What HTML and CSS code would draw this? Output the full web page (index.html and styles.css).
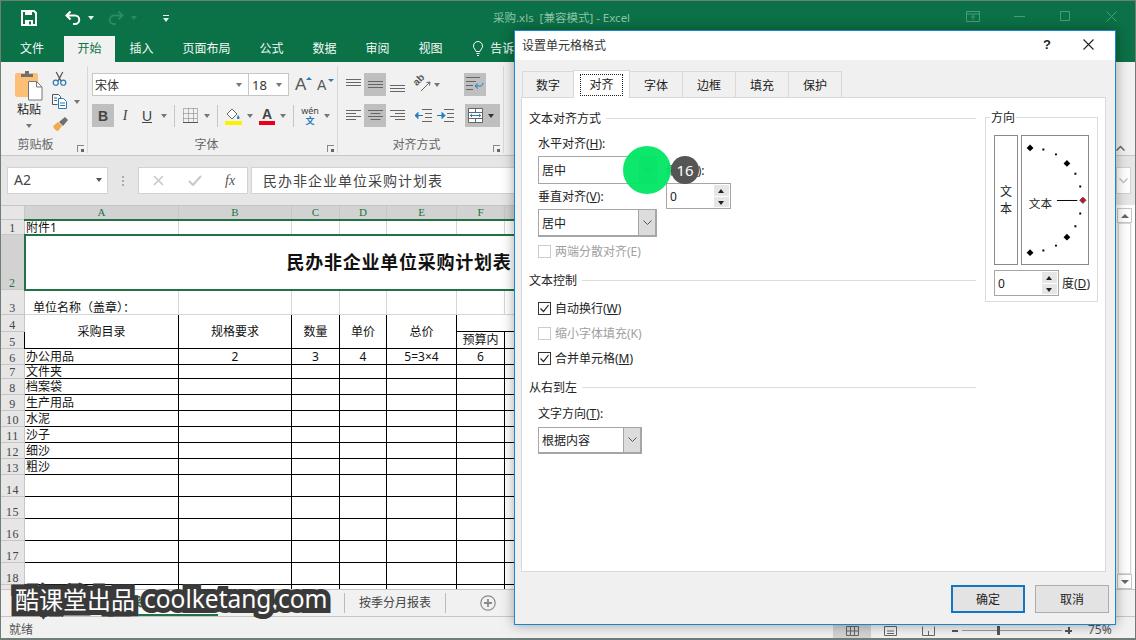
FILE: index.html
```html
<!DOCTYPE html>
<html lang="zh-CN">
<head>
<meta charset="utf-8">
<title>采购.xls - Excel</title>
<link rel="stylesheet" href="styles.css">
</head>
<body>
<div class="app">
  <header class="titlebar">
    <div class="qat">
      <svg class="ic-save" width="16" height="16" viewBox="0 0 16 16"><path d="M1 1h12l2 2v12H1z" fill="none" stroke="#fff" stroke-width="2"/><path d="M4 1h7v4H4zM4 10h8v5H4z" fill="#fff"/><path d="M8 11.500h2v3H8z" fill="#0b7146"/></svg>
      <svg class="ic-undo" width="16" height="16" viewBox="0 0 16 16"><path d="M5.500 1.500 1.500 5.500l4 4M2 5.500h8a4.200 4.200 0 0 1 0 8.500H8" fill="none" stroke="#fff" stroke-width="2"/></svg>
      <i class="caret white c-undo"></i>
      <svg class="ic-redo" width="16" height="16" viewBox="0 0 16 16"><path d="M10.500 1.500 14.500 5.500l-4 4M14 5.500H6a4.200 4.200 0 0 0 0 8.500h2" fill="none" stroke="#2b8a62" stroke-width="2"/></svg>
      <i class="caret dim c-redo"></i>
      <span class="custom"><b></b><i class="caret white"></i></span>
    </div>
    <div class="doc-title">采购.xls&nbsp; [兼容模式] - Excel</div>
    <div class="win-btns">
      <svg width="14" height="11" viewBox="0 0 14 11"><path d="M.5.500h13v10H.5zM.5 3h13M7 9V4.500M5 6.500 7 4.500l2 2" fill="none" stroke="#4b9c7a"/></svg>
      <svg width="11" height="11" viewBox="0 0 11 11"><path d="M0 5.500h11" stroke="#4b9c7a"/></svg>
      <svg width="10" height="10" viewBox="0 0 10 10"><path d="M.5.500h9v9h-9z" fill="none" stroke="#4b9c7a"/></svg>
      <svg width="11" height="11" viewBox="0 0 11 11"><path d="M.5.500l10 10M10.500.500l-10 10" stroke="#4b9c7a"/></svg>
    </div>
  </header>

  <nav class="tabs">
    <span class="tab file">文件</span>
    <span class="tab active">开始</span>
    <span class="tab">插入</span>
    <span class="tab">页面布局</span>
    <span class="tab">公式</span>
    <span class="tab">数据</span>
    <span class="tab">审阅</span>
    <span class="tab">视图</span>
    <svg class="lamp" width="10" height="15" viewBox="0 0 10 15"><path d="M3 10.500C2.500 8.500.5 7.500.5 5a4.500 4.500 0 0 1 9 0c0 2.500-2 3.500-2.500 5.500zM3.500 12.500h3M4 14.500h2" fill="none" stroke="#fff"/></svg>
    <span class="tell">告诉我</span>
  </nav>

  <section class="ribbon">
    <div class="group g-clip">
      <div class="g-body clip-body">
        <div class="paste">
          <svg width="29" height="31" viewBox="0 0 29 31"><path d="M1 5q0-2 2-2h19q2 0 2 2v22H3q-2 0-2-2z" fill="#fdbf75"/><path d="M7 4h4V1h4v3h4v3H7z" fill="#6f6f6f"/><path d="M14.500 11.500h8l5.500 5.500v13H14.500z" fill="#fff" stroke="#777"/><path d="M22.500 11.500V17H28" fill="none" stroke="#777"/></svg>
          <span>粘贴</span>
          <i class="caret"></i>
        </div>
        <div class="clip-tools">
          <svg width="15" height="15" viewBox="0 0 16 16"><path d="M4.500 1l5 9.500M11.500 1l-5 9.500" stroke="#555" stroke-width="1.300"/><circle cx="4" cy="12.500" r="2.700" fill="none" stroke="#2a7bb8" stroke-width="1.300"/><circle cx="12" cy="12.500" r="2.700" fill="none" stroke="#2a7bb8" stroke-width="1.300"/></svg>
          <span class="clip-copy"><svg width="16" height="15" viewBox="0 0 16 15"><path d="M.5.500h6l2 2v2M.5.500v10h5" fill="#fff" stroke="#555"/><path d="M6.500 4.500h5l3 3v7h-8z" fill="#fff" stroke="#2a7bb8"/><path d="M2 4h3M2 6.500h3M8 9h5M8 11.500h5" stroke="#2a7bb8"/></svg><i class="caret"></i></span>
          <svg width="16" height="15" viewBox="0 0 16 15"><path d="M1 9l5-4 4 4-4 5q-3 0-5-5z" fill="#f0a94d"/><path d="M7 5l6-5 3 3-5 6z" fill="#6f6f6f"/></svg>
        </div>
      </div>
      <div class="g-label">剪贴板<i class="launch"></i></div>
    </div>

    <div class="group g-font">
      <div class="g-body">
        <div class="r-row">
          <div class="combo font-name">宋体<i class="caret"></i></div>
          <div class="combo font-size">18<i class="caret"></i></div>
          <span class="grow">A<b class="up"></b></span>
          <span class="shrink">A<b class="down"></b></span>
        </div>
        <div class="r-row row2">
          <span class="btn on bold">B</span>
          <span class="btn ital">I</span>
          <span class="btn und">U</span><i class="caret c-u"></i>
          <i class="vsep s1"></i>
          <svg class="ic-border" width="15" height="15" viewBox="0 0 15 15"><path d="M.5.500h14v14H.5zM5.500.500v14M10.500.500v14M.5 5.500h14M.5 10.500h14" fill="none" stroke="#777" stroke-dasharray="1 1"/><path d="M0 14.500h15" stroke="#555"/></svg><i class="caret c-b"></i>
          <i class="vsep s2"></i>
          <svg class="ic-fill" width="17" height="18" viewBox="0 0 17 18"><path d="M2 7l5-5 5 5-5 5z" fill="#fff" stroke="#666"/><path d="M13 8q2 2 1.500 3.500-1 1-2.500 0 0-2 1-3.500z" fill="#2a7bb8"/><path d="M0 14h17v4H0z" fill="#fdf100"/></svg><i class="caret c-f"></i>
          <span class="fcolor">A<b></b></span><i class="caret c-c"></i>
          <i class="vsep s3"></i>
          <span class="wen"><em>wén</em><u>文</u></span><i class="caret c-w"></i>
        </div>
      </div>
      <div class="g-label">字体<i class="launch"></i></div>
    </div>

    <div class="group g-align">
      <div class="g-body">
        <div class="r-row">
          <span class="al"><svg width="15" height="15" viewBox="0 0 15 15"><path d="M0 2.500h15M0 5.500h15M0 8.500h15" stroke="#666"/></svg></span>
          <span class="al on"><svg width="15" height="15" viewBox="0 0 15 15"><path d="M0 4.500h15M0 7.500h15M0 10.500h15" stroke="#666"/></svg></span>
          <span class="al"><svg width="15" height="15" viewBox="0 0 15 15"><path d="M0 8.500h15M0 11.500h15M0 14.500h15" stroke="#666"/></svg></span>
          <span class="orient"><b>ab</b><svg width="17" height="17" viewBox="0 0 17 17"><path d="M7 15L16 6M16 6l-3.500.5M16 6l-.5 3.500" stroke="#666" fill="none"/></svg></span><i class="caret c-o"></i>
          <span class="al on wrap"><svg width="18" height="17" viewBox="0 0 18 17"><path d="M0 1.500h14M0 5.500h10M0 9.500h7M0 13.500h7" stroke="#666"/><path d="M9 10h6q2-1 2-3M9 10l3-2.500M9 10l3 2.500" stroke="#1f7dbf" fill="none"/></svg></span>
        </div>
        <div class="r-row row2">
          <span class="al"><svg width="15" height="15" viewBox="0 0 15 15"><path d="M0 2.500h15M0 5.500h10M0 8.500h15M0 11.500h10" stroke="#666"/></svg></span>
          <span class="al on"><svg width="15" height="15" viewBox="0 0 15 15"><path d="M0 2.500h15M2.500 5.500h10M0 8.500h15M2.500 11.500h10" stroke="#666"/></svg></span>
          <span class="al"><svg width="15" height="15" viewBox="0 0 15 15"><path d="M0 2.500h15M5 5.500h10M0 8.500h15M5 11.500h10" stroke="#666"/></svg></span>
          <svg class="ic-ind1" width="17" height="13" viewBox="0 0 17 13"><path d="M7 .5h10M10 4.500h7M10 8.500h7M7 12.500h10" stroke="#666"/><path d="M0 6.500h8M0 6.500l3-3v6z" stroke="#1f7dbf" fill="#1f7dbf"/></svg>
          <svg class="ic-ind2" width="17" height="13" viewBox="0 0 17 13"><path d="M7 .5h10M10 4.500h7M10 8.500h7M7 12.500h10" stroke="#666"/><path d="M0 6.500h8M8 6.500l-3-3v6z" stroke="#1f7dbf" fill="#1f7dbf"/></svg>
          <span class="al on merge"><svg width="15" height="15" viewBox="0 0 15 15"><path d="M.5.500h14v14H.5zM.5 4.500h14M.5 10.500h14M7.500.5v4M7.500 10.500v4" fill="#fff" stroke="#666"/><path d="M2 7.500h11" stroke="#1f7dbf"/><path d="M2 7.500l2-2v4zM13 7.500l-2-2v4z" fill="#1f7dbf"/></svg><i class="caret dark"></i></span>
        </div>
      </div>
      <div class="g-label">对齐方式<i class="launch"></i></div>
    </div>

    <svg class="collapse" width="9" height="6" viewBox="0 0 9 6"><path d="M.5 5.500l4-4 4 4" fill="none" stroke="#666" stroke-width="1.500"/></svg>
  </section>

  <section class="fx-bar">
    <div class="name-box">A2<i class="caret"></i></div>
    <i class="grip"></i>
    <div class="fx-btns">
      <svg width="11" height="11" viewBox="0 0 11 11"><path d="M1 1l9 9M10 1l-9 9" stroke="#c8c8c8" stroke-width="1.600"/></svg>
      <svg width="14" height="11" viewBox="0 0 14 11"><path d="M1 6l4 4 8-9" fill="none" stroke="#c8c8c8" stroke-width="2"/></svg>
      <span class="fx">fx</span>
    </div>
    <div class="fx-input">民办非企业单位采购计划表</div>
    <div class="fx-down"><svg width="9" height="6" viewBox="0 0 9 6"><path d="M.5.500l4 4 4-4" fill="none" stroke="#c4c4c4" stroke-width="1.500"/></svg></div>
  </section>

  <section class="sheet">
    <div class="grid-wrap">
      <table class="grid">
        <colgroup><col class="c0"><col class="ca"><col class="cb"><col class="cc"><col class="cd"><col class="ce"><col class="cf"><col class="cg"></colgroup>
        <tr class="h14"><th class="corner"></th><th class="sel">A</th><th class="sel">B</th><th class="sel">C</th><th class="sel">D</th><th class="sel">E</th><th class="sel">F</th><th class="sel">G</th></tr>
        <tr class="h15"><th class="rh">1</th><td class="txt">附件1</td><td></td><td></td><td></td><td></td><td></td><td></td></tr>
        <tr class="h55"><th class="rh rsel">2</th><td class="title" colspan="7">民办非企业单位采购计划表</td></tr>
        <tr class="h25"><th class="rh">3</th><td class="txt unit">单位名称（盖章）：</td><td></td><td></td><td></td><td></td><td></td><td></td></tr>
        <tr class="h17 blk"><th class="rh">4</th><td class="ctr" rowspan="2">采购目录</td><td class="ctr" rowspan="2">规格要求</td><td class="ctr" rowspan="2">数量</td><td class="ctr" rowspan="2">单价</td><td class="ctr" rowspan="2">总价</td><td colspan="2"></td></tr>
        <tr class="h17 blk"><th class="rh">5</th><td class="ctr">预算内</td><td class="ctr">预算外</td></tr>
        <tr class="h16 blk"><th class="rh">6</th><td class="txt">办公用品</td><td class="ctr">2</td><td class="ctr">3</td><td class="ctr">4</td><td class="ctr">5=3×4</td><td class="ctr">6</td><td class="ctr">7</td></tr>
        <tr class="h14 blk"><th class="rh">7</th><td class="txt">文件夹</td><td></td><td></td><td></td><td></td><td></td><td></td></tr>
        <tr class="h16 blk"><th class="rh">8</th><td class="txt">档案袋</td><td></td><td></td><td></td><td></td><td></td><td></td></tr>
        <tr class="h16 blk"><th class="rh">9</th><td class="txt">生产用品</td><td></td><td></td><td></td><td></td><td></td><td></td></tr>
        <tr class="h16 blk"><th class="rh">10</th><td class="txt">水泥</td><td></td><td></td><td></td><td></td><td></td><td></td></tr>
        <tr class="h16 blk"><th class="rh">11</th><td class="txt">沙子</td><td></td><td></td><td></td><td></td><td></td><td></td></tr>
        <tr class="h16 blk"><th class="rh">12</th><td class="txt">细沙</td><td></td><td></td><td></td><td></td><td></td><td></td></tr>
        <tr class="h16 blk"><th class="rh">13</th><td class="txt">粗沙</td><td></td><td></td><td></td><td></td><td></td><td></td></tr>
        <tr class="h22 blk"><th class="rh">14</th><td></td><td></td><td></td><td></td><td></td><td></td><td></td></tr>
        <tr class="h22 blk"><th class="rh">15</th><td></td><td></td><td></td><td></td><td></td><td></td><td></td></tr>
        <tr class="h22 blk"><th class="rh">16</th><td></td><td></td><td></td><td></td><td></td><td></td><td></td></tr>
        <tr class="h22 blk"><th class="rh">17</th><td></td><td></td><td></td><td></td><td></td><td></td><td></td></tr>
        <tr class="h22 blk"><th class="rh">18</th><td></td><td></td><td></td><td></td><td></td><td></td><td></td></tr>
        <tr class="h22 blk"><th class="rh">19</th><td></td><td></td><td></td><td></td><td></td><td></td><td></td></tr>
      </table>
    </div>
    <div class="vscroll">
      <span class="sb-btn"><i class="tri-up"></i></span>
      <span class="sb-track"></span>
      <span class="sb-btn"><i class="tri-down"></i></span>
    </div>
  </section>

  <section class="tabbar">
    <span class="s-tab s-first"></span>
    <span class="s-tab s-active">采购计划表</span>
    <span class="s-tab s-mid">按部门分月报表</span>
    <span class="s-tab s-last">按季分月报表</span>
    <svg class="plus" width="16" height="16" viewBox="0 0 16 16"><circle cx="8" cy="8" r="7.200" fill="none" stroke="#8a8a8a" stroke-width="1.200"/><path d="M8 4v8M4 8h8" stroke="#8a8a8a" stroke-width="1.800"/></svg>
  </section>

  <footer class="status">
    <span class="ready">就绪</span>
    <div class="views">
      <span class="view on"><svg width="13" height="10" viewBox="0 0 13 10"><path d="M.5.500h12v9H.5zM4.500.500v9M8.500.500v9M.5 5h12" fill="none" stroke="#666"/></svg></span>
      <span class="view"><svg width="13" height="10" viewBox="0 0 13 10"><path d="M.5.500h12v9H.5zM3 5h7M3 7.500h7" fill="none" stroke="#666"/></svg></span>
      <span class="view"><svg width="13" height="10" viewBox="0 0 13 10"><path d="M.5.500v9h12v-9M6.500 5v4" fill="none" stroke="#666"/></svg></span>
    </div>
    <span class="z-minus"></span>
    <span class="z-track"><b></b></span>
    <span class="z-plus"></span>
    <span class="z-val">75%</span>
  </footer>

  <div class="dialog">
    <div class="dlg-title">
      <span class="dlg-name">设置单元格格式</span>
      <span class="dlg-help">?</span>
      <svg class="dlg-close" width="11" height="11" viewBox="0 0 11 11"><path d="M.5.500l10 10M10.500.500l-10 10" stroke="#222" stroke-width="1.100"/></svg>
    </div>
    <div class="dlg-tabs">
      <span class="d-tab">数字</span>
      <span class="d-tab on"><span class="focus">对齐</span></span>
      <span class="d-tab">字体</span>
      <span class="d-tab">边框</span>
      <span class="d-tab">填充</span>
      <span class="d-tab">保护</span>
    </div>
    <div class="panel">
      <div class="left">
        <div class="head h-first"><span>文本对齐方式</span><i></i></div>
        <div class="field">
          <div class="h-row">
            <div class="h-main">
              <div class="lbl l1">水平对齐(<u>H</u>):</div>
              <div class="select s-119 hot">居中<span class="arrow"><svg width="9" height="6" viewBox="0 0 9 6"><path d="M.5.500l4 4 4-4" fill="none" stroke="#333"/></svg></span></div>
              <div class="lbl l2">垂直对齐(<u>V</u>):</div>
              <div class="select s-119 pressed">居中<span class="arrow"><svg width="9" height="6" viewBox="0 0 9 6"><path d="M.5.500l4 4 4-4" fill="none" stroke="#555"/></svg></span></div>
            </div>
            <div class="h-side">
              <div class="lbl">缩进(<u>I</u>):</div>
              <div class="spin"><span>0</span><em><b class="tri-up"></b><b class="tri-down"></b></em></div>
            </div>
          </div>
          <label class="check c-justify off"><i></i><span>两端分散对齐(E)</span></label>
        </div>
        <div class="head h-ctrl"><span>文本控制</span><i></i></div>
        <div class="field">
          <label class="check c-wrap"><i class="ck"><svg width="11" height="11" viewBox="0 0 11 11"><path d="M1.500 5.500l3 3 5-6.500" fill="none" stroke="#222" stroke-width="1.200"/></svg></i><span>自动换行(<u>W</u>)</span></label>
          <label class="check c-next off"><i></i><span>缩小字体填充(K)</span></label>
          <label class="check c-next"><i class="ck"><svg width="11" height="11" viewBox="0 0 11 11"><path d="M1.500 5.500l3 3 5-6.500" fill="none" stroke="#222" stroke-width="1.200"/></svg></i><span>合并单元格(<u>M</u>)</span></label>
        </div>
        <div class="head h-rtl"><span>从右到左</span><i></i></div>
        <div class="field">
          <div class="lbl l3">文字方向(<u>T</u>):</div>
          <div class="select s-104 pressed">根据内容<span class="arrow"><svg width="9" height="6" viewBox="0 0 9 6"><path d="M.5.500l4 4 4-4" fill="none" stroke="#555"/></svg></span></div>
        </div>
      </div>
      <div class="direction">
        <div class="legend">方向</div>
        <div class="dir-row">
          <div class="v-text"><span>文</span><span>本</span></div>
          <svg class="semi" width="68" height="130" viewBox="0 0 68 130">
            <path d="M8.300 7.800l3.500 3.500-3.500 3.500-3.500-3.500zM46.300 23.800l3.500 3.500-3.500 3.500-3.500-3.500zM46.300 99.800l3.500 3.500-3.500 3.500-3.500-3.500zM8.300 115.800l3.500 3.500-3.500 3.500-3.500-3.500z" fill="#000"/>
            <path d="M21 12h2v2h-2zM34 17h2v2h-2zM54 37h2v2h-2zM59 50h2v2h-2zM59 78h2v2h-2zM54 91h2v2h-2zM34 111h2v2h-2zM21 116h2v2h-2z" fill="#000"/>
            <path d="M36 65.500h21" stroke="#000"/>
            <path d="M62.700 62l3.300 3.300-3.300 3.300-3.300-3.300z" fill="#c8102e" stroke="#333" stroke-width=".6"/>
            <text x="7" y="73" class="semi-text">文本</text>
          </svg>
        </div>
        <div class="deg-row">
          <div class="spin"><span>0</span><em><b class="tri-up"></b><b class="tri-down"></b></em></div>
          <span class="deg">度(<u>D</u>)</span>
        </div>
      </div>
    </div>
    <div class="dlg-foot">
      <span class="dbtn ok">确定</span>
      <span class="dbtn">取消</span>
    </div>
    <span class="cursor-dot"></span>
    <span class="step">16</span>
  </div>

  <div class="watermark"><span class="wm-cn">酷课堂出品</span><span class="wm-url">coolketang.com</span></div>
</div>
</body>
</html>
```

FILE: styles.css
```css
* { box-sizing: border-box; }
html, body { margin: 0; padding: 0; }
body { width: 1136px; height: 640px; overflow: hidden; font-family: "Noto Sans", "Noto Sans CJK SC", sans-serif; font-size: 12px; color: #333; }
i, em, b, u { font-style: normal; }
svg { display: block; flex: none; }
.app { position: relative; width: 1136px; height: 640px; display: flex; flex-direction: column; background: #f1f1f1; overflow: hidden; }
.app::after { content: ""; position: absolute; inset: 0; border: 1px solid #6f7f78; border-width: 1px 1px 2px 1px; pointer-events: none; }

.caret { display: inline-block; width: 0; height: 0; border: 3.5px solid transparent; border-top: 4px solid #777; border-bottom: 0; flex: none; }
.caret.white { border-top-color: #e8f2ee; }
.caret.dim { border-top-color: #2b8a62; }
.caret.dark { border-top-color: #333; }

/* title bar */
.titlebar { height: 36px; background: #0b7146; display: flex; align-items: center; flex: none; position: relative; }
.qat { display: flex; align-items: center; width: 493px; flex: none; padding-left: 21px; }
.ic-undo { margin-left: 28px; }
.c-undo { margin-left: 7px; }
.ic-redo { margin-left: 14px; }
.c-redo { margin-left: 7px; }
.custom { margin-left: 26px; display: flex; flex-direction: column; gap: 2px; align-items: center; }
.custom b { width: 6px; height: 1px; background: #e8f2ee; }
.doc-title { color: #8ec3ab; font-size: 11.500px; width: 470px; margin-bottom: 2px; }
.win-btns { display: flex; align-items: center; margin: 0 0 4px 3px; gap: 34px; }
.win-btns svg:nth-child(3) { margin-left: 1px; }
.win-btns svg:nth-child(4) { margin-left: 2px; }

/* tabs */
.tabs { height: 26px; background: #0b7146; display: flex; align-items: stretch; flex: none; color: #f4faf7; }
.tab { padding: 0 14.500px 3px; display: flex; align-items: center; }
.tab.file { padding: 0 20px 3px; }
.tab.active { background: #f1f1f1; color: #0b7146; padding: 0 13.500px 3px; }
.lamp { margin: 5px 0 0 16px; }
.tell { margin: 0 0 0 7px; padding-bottom: 3px; display: flex; align-items: center; }

/* ribbon */
.ribbon { height: 94px; flex: none; display: flex; border-bottom: 1px solid #c6c6c6; background: #f1f1f1; }
.group { display: flex; flex-direction: column; border-right: 1px solid #d8d8d8; margin-bottom: 2px; margin-top: 4px; }
.g-clip { width: 88px; }
.g-font { width: 250px; padding-left: 4px; }
.g-align { width: 166px; padding-left: 8px; }
.g-body { flex: 1; padding-top: 7px; }
.g-label { height: 18px; display: flex; justify-content: center; align-items: center; color: #666; position: relative; font-size: 12px; padding-right: 16px; }
.launch { position: absolute; right: 3px; bottom: 1px; width: 7px; height: 7px; border-left: 1px solid #888; border-top: 1px solid #888; }
.launch::after { content: ""; position: absolute; right: 0; bottom: 0; width: 3px; height: 3px; background: #666; }
.clip-body { display: flex; padding-top: 4px; }
.paste { width: 40px; margin-left: 9px; display: flex; flex-direction: column; align-items: center; }
.paste svg { margin-left: -1px; }
.paste span { line-height: 17px; color: #222; }
.paste .caret { margin-top: 6px; }
.clip-tools { display: flex; flex-direction: column; gap: 8px; padding-top: 1px; margin-left: 3px; }
.clip-copy { display: flex; align-items: center; gap: 6px; }
.r-row { display: flex; align-items: center; height: 23px; }
.row2 { margin-top: 8px; }
.combo { height: 23px; background: #fff; border: 1px solid #c6c6c6; display: flex; align-items: center; justify-content: space-between; padding: 0 6px 0 2px; color: #333; }
.font-name { width: 157px; }
.font-size { width: 41px; margin-left: -1px; padding-left: 3px; font-size: 13px; }
.grow, .shrink { position: relative; color: #555; font-family: "Liberation Sans", sans-serif; }
.grow { font-size: 17px; margin-left: 6px; width: 22px; }
.shrink { font-size: 14px; width: 18px; }
.grow b, .shrink b { position: absolute; top: 2px; left: 11px; width: 0; height: 0; border: 3px solid transparent; }
.up { border-bottom: 3px solid #2a7bb8 !important; border-top: 0 !important; }
.down { border-top: 3px solid #2a7bb8 !important; border-bottom: 0 !important; }
.btn { width: 22px; height: 23px; display: flex; align-items: center; justify-content: center; font-family: "Liberation Sans", sans-serif; font-size: 14px; color: #444; flex: none; }
.btn.on { background: #bfbfbf; }
.bold { font-weight: 700; }
.ital { font-style: italic; font-family: "Liberation Serif", serif; }
.und { text-decoration: underline; }
.c-u { margin-left: 3px; }
.vsep { width: 1px; height: 22px; background: #c6c6c6; flex: none; }
.s1 { margin-left: 7px; }
.ic-border { margin-left: 8px; }
.c-b { margin-left: 6px; }
.s2 { margin-left: 7px; }
.ic-fill { margin-left: 7px; }
.c-f { margin-left: 5px; }
.fcolor { margin-left: 6px; width: 16px; display: flex; flex-direction: column; align-items: center; font: 700 14px/14px "Liberation Sans", sans-serif; color: #444; }
.fcolor b { width: 16px; height: 4px; background: #e8001c; }
.c-c { margin-left: 5px; }
.s3 { margin-left: 7px; }
.wen { margin-left: 8px; display: flex; flex-direction: column; align-items: center; width: 16px; }
.wen em { font-size: 9px; line-height: 10px; color: #444; }
.wen u { text-decoration: none; font-size: 9px; line-height: 9px; color: #1f7dbf; font-weight: 700; }
.c-w { margin-left: 6px; }
.al { width: 22px; height: 23px; display: flex; align-items: center; justify-content: center; margin-right: 4px; flex: none; }
.al:first-child { width: 15px; margin-right: 3px; }
.al.on { background: #bfbfbf; }
.al:nth-child(3) { width: 15px; }
.orient { width: 17px; height: 17px; margin-left: 5px; position: relative; flex: none; }
.orient b { position: absolute; left: -1px; top: -1px; font: 700 10px/10px "Liberation Sans", sans-serif; color: #555; transform: rotate(-45deg); }
.c-o { margin-left: 3px; }
.wrap { margin-left: 24px; }
.ic-ind1 { margin-left: 6px; }
.ic-ind2 { margin-left: 5px; }
.merge { width: 35px; margin-left: 11px; gap: 5px; justify-content: flex-start; padding-left: 3px; }
.collapse { margin: 83px 0 0 612px; }

/* formula bar */
.fx-bar { height: 49px; flex: none; background: #e6e6e6; display: flex; align-items: flex-start; padding: 11px 0 0 7px; }
.name-box { width: 101px; height: 27px; background: #fff; border: 1px solid #d2d2d2; display: flex; align-items: center; justify-content: space-between; padding: 0 5px 2px 6px; font-size: 14px; color: #444; }
.name-box .caret { border-top-color: #555; }
.grip { width: 2px; height: 10px; margin: 9px 14px 0 14px; border-left: 2px dotted #aaa; }
.fx-btns { width: 110px; height: 27px; background: #fff; border: 1px solid #d2d2d2; display: flex; align-items: center; padding-left: 14px; gap: 24px; }
.fx { font: italic 14px "Liberation Serif", serif; color: #555; margin-left: -1px; }
.fx-input { width: 865px; height: 27px; margin-left: 3px; background: #fff; border: 1px solid #d2d2d2; display: flex; align-items: center; padding: 0 0 2px 11px; font-size: 14px; letter-spacing: 1px; color: #444; }
.fx-down { width: 0; flex: 1; height: 27px; margin: 0 5px 0 0; background: #fff; border: 1px solid #d2d2d2; display: flex; align-items: center; justify-content: center; }

/* sheet */
.sheet { height: 384px; flex: none; display: flex; background: #fff; }
.grid-wrap { width: 1116px; overflow: hidden; flex: none; background: #fff; }
.grid { table-layout: fixed; border-collapse: collapse; width: 560px; font-size: 12px; color: #111; }
.c0 { width: 24px; } .ca { width: 154px; } .cb { width: 113px; } .cc { width: 48px; } .cd { width: 47px; } .ce { width: 70px; } .cf { width: 48px; } .cg { width: 56px; }
.grid td, .grid th { padding: 0; overflow: hidden; white-space: nowrap; line-height: 12px; }
.grid td { border: 1px solid #d6d6d6; vertical-align: bottom; }
.grid tr.blk td { border: 1px solid #000; vertical-align: middle; }
.grid td.txt { overflow: visible; }
.h14 { height: 14px; } .h15 { height: 15px; } .h16 { height: 16px; } .h17 { height: 17px; } .h22 { height: 22px; } .h25 { height: 25px; } .h55 { height: 55px; }
.grid th { background: #e6e6e6; font: 400 11px/11px "Liberation Serif", serif; color: #444; border: 1px solid #c6c6c6; }
.grid th.corner { background: #e6e6e6; }
.grid th.sel { background: #d2d2d2; color: #217346; border-bottom: 2px solid #217346; }
.grid th.rh { vertical-align: bottom; text-align: center; letter-spacing: .5px; font-size: 12px; }
.grid th.rsel { background: #d2d2d2; color: #217346; }
.grid td.title { border: 2px solid #217346; padding-left: 261px; font-size: 18px; letter-spacing: .75px; font-weight: 700; vertical-align: middle; text-align: left; color: #111; }
.txt { padding-left: 1px !important; }
.unit { padding-left: 8px !important; }
.ctr { text-align: center; }
.vscroll { width: 15px; display: flex; flex-direction: column; background: #f1f1f1; margin: 3px 4px 0 1px; flex: none; }
.sb-btn { height: 15px; background: #fff; border: 1px solid #c6c6c6; display: flex; align-items: center; justify-content: center; flex: none; }
.sb-track { flex: 1; background: #fff; border: 1px solid #d8d8d8; margin: 0 1px; }
.tri-up { display: block; width: 0; height: 0; border: 4px solid transparent; border-bottom: 4px solid #666; border-top: 0; }
.tri-down { display: block; width: 0; height: 0; border: 4px solid transparent; border-top: 4px solid #666; border-bottom: 0; }

/* sheet tabs */
.tabbar { height: 28px; flex: none; border-top: 1px solid #c6c6c6; border-bottom: 1px solid #c6c6c6; display: flex; align-items: stretch; background: #f1f1f1; color: #444; }
.s-tab { display: flex; align-items: center; justify-content: center; flex: none; }
.s-first { width: 102px; }
.s-active { width: 116px; background: #fff; color: #217346; border-bottom: 2px solid #217346; font-weight: 700; }
.s-mid { width: 127px; border-right: 1px solid #bbb; margin: 3px 0; }
.s-last { width: 101px; border-right: 1px solid #bbb; margin: 3px 0; padding-bottom: 2px; }
.plus { margin: 5px 0 0 34px; }

/* status bar */
.status { height: 23px; flex: none; display: flex; align-items: center; color: #555; background: #f1f1f1; }
.ready { width: 833px; padding-left: 9px; }
.views { display: flex; align-self: stretch; }
.view { width: 38px; display: flex; align-items: center; justify-content: center; padding-top: 4px; }
.view.on { background: #d2d2d2; }
.z-minus { width: 6px; height: 2px; background: #555; margin: 4px 0 0 5px; }
.z-track { width: 100px; height: 1px; background: #999; margin: 4px 0 0 4px; position: relative; }
.z-track b { position: absolute; left: 35px; top: -4px; width: 3px; height: 9px; background: #555; }
.z-plus { width: 7px; height: 7px; margin: 4px 0 0 3px; background: linear-gradient(#555, #555) center/7px 2px no-repeat, linear-gradient(#555, #555) center/2px 7px no-repeat; }
.z-val { margin: 2px 0 0 16px; }

/* dialog */
.dialog { position: absolute; left: 514px; top: 30px; width: 602px; height: 595px; background: #f0f0f0; border: 1px solid #1b86d0; box-shadow: 0 0 12px rgba(0, 0, 0, .35); display: flex; flex-direction: column; color: #222; z-index: 2; }
.dlg-title { height: 29px; flex: none; background: #fff; display: flex; align-items: center; padding: 0 0 2px 7px; }
.dlg-name { width: 521px; color: #333; }
.dlg-help { font: 700 13px "Liberation Sans", sans-serif; width: 40px; color: #222; }
.dlg-tabs { height: 37px; flex: none; display: flex; align-items: flex-end; padding-left: 7px; }
.d-tab { width: 54px; height: 26px; border: 1px solid #d9d9d9; border-bottom: 0; margin-right: -1px; display: flex; align-items: center; justify-content: center; position: relative; background: #f0f0f0; }
.d-tab:nth-child(1) { width: 52px; }
.d-tab.on { width: 57px; height: 28px; background: #fff; margin-bottom: -1px; z-index: 1; }
.focus { border: 1px dotted #222; padding: 0 8px; line-height: 20px; }
.panel { width: 585px; height: 475px; flex: none; margin-left: 6px; background: #fff; border: 1px solid #d9d9d9; display: flex; padding-left: 7px; }
.left { width: 447px; flex: none; }
.head { display: flex; align-items: center; gap: 5px; height: 16px; color: #222; }
.head i { flex: 1; height: 1px; background: #dcdcdc; }
.h-first { margin-top: 12px; }
.h-ctrl { margin-top: 13px; }
.h-rtl { margin-top: 13px; }
.field { padding-left: 9px; }
.lbl { line-height: 16px; white-space: nowrap; }
.lbl u, .check u, .deg u { text-decoration: underline; }
.l1 { margin-top: 10px; }
.l2 { margin-top: 5px; }
.l3 { margin-top: 11px; }
.h-row { display: flex; }
.h-side { margin-left: 9px; padding-top: 37px; }
.select { height: 28px; background: #fff; border: 1px solid #a6a6a6; display: flex; align-items: center; justify-content: space-between; padding-left: 3px; margin-top: 4px; color: #222; }
.s-119 { width: 119px; }
.s-104 { width: 104px; margin-top: 5px; height: 27px; }
.arrow { width: 17px; align-self: stretch; display: flex; align-items: center; justify-content: center; border-left: 1px solid #a6a6a6; background: #fff; }
.pressed { border: 2px solid #a6a6a6; border-left-width: 1px; border-top-width: 1px; }
.pressed .arrow { background: #dcdcdc; }
.hot .arrow { background: #c8c8c8; }
.spin { width: 65px; height: 26px; background: #fff; border: 1px solid #a6a6a6; display: flex; justify-content: space-between; align-items: center; padding: 0 1px 0 3px; margin-top: 4px; }
.spin em { width: 15px; display: flex; flex-direction: column; gap: 1px; align-self: stretch; padding: 1px 0; }
.spin em b { flex: 1; width: 15px; height: auto; border: 0; background: #e6e6e6; position: relative; }
.spin em b::after { content: ""; position: absolute; left: 4px; top: 4px; border: 3px solid transparent; }
.spin em .tri-up::after { border-bottom: 4px solid #222; border-top: 0; }
.spin em .tri-down::after { border-top: 4px solid #222; border-bottom: 0; }
.check { display: flex; align-items: center; height: 16px; gap: 4px; color: #222; white-space: nowrap; }
.check i { width: 13px; height: 13px; border: 1px solid #333; background: #fff; display: flex; align-items: center; justify-content: center; flex: none; }
.check.off { color: #a0a0a0; }
.check.off i { border-color: #ccc; }
.c-justify { margin-top: 6px; }
.c-wrap { margin-top: 12px; }
.c-next { margin-top: 9px; }
.direction { width: 113px; height: 185px; flex: none; margin: 19px 0 0 9px; border: 1px solid #dcdcdc; padding-left: 8px; }
.legend { width: fit-content; margin: -8px 0 0 -4px; background: #fff; padding: 0 1px; line-height: 16px; height: 16px; }
.dir-row { display: flex; gap: 3px; margin-top: 9px; }
.v-text { width: 24px; height: 130px; border: 1px solid #8a8a8a; display: flex; flex-direction: column; align-items: center; justify-content: center; gap: 3px; line-height: 14px; }
.semi { border: 1px solid #8a8a8a; }
.semi-text { font-size: 12px; font-family: "Noto Sans CJK SC", sans-serif; fill: #222; }
.deg-row { display: flex; align-items: center; margin-top: 1px; }
.deg { margin: 4px 0 0 3px; white-space: nowrap; }
.dlg-foot { display: flex; justify-content: flex-end; gap: 10px; padding-right: 6px; margin-top: 13px; }
.dbtn { width: 74px; height: 28px; background: #e3e3e3; border: 1px solid #adadad; display: flex; align-items: center; justify-content: center; }
.dbtn.ok { border: 2px solid #1077c4; }
.cursor-dot { position: absolute; left: 108px; top: 115px; width: 48px; height: 48px; border-radius: 50%; background: rgba(0, 230, 100, .95); }
.step { position: absolute; left: 156px; top: 125px; width: 28px; height: 28px; border-radius: 50%; background: #555; color: #fff; font-size: 15px; display: flex; align-items: center; justify-content: center; padding-bottom: 1px; }

/* watermark */
.watermark { position: absolute; left: 12px; top: 586px; display: flex; gap: 9px; align-items: flex-start; color: #fff; line-height: 27px; z-index: 3; }
.watermark span { white-space: nowrap; -webkit-text-stroke: 10px #3a3a3a; paint-order: stroke fill; }
.wm-cn { font-size: 24px; padding: 0 0 0 3px; }
.watermark .wm-url { font-family: "Noto Sans", sans-serif; font-size: 24.500px; line-height: 26px; }
```
